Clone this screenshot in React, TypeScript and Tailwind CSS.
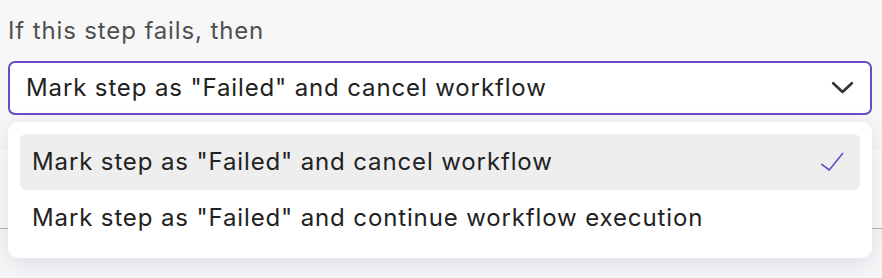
import React from "react";

export default function App() {
  return (
    <div
      className="relative w-[882px] h-[278px] overflow-hidden bg-[#f7f7f8]"
      style={{ fontFamily: "Inter, 'Noto Sans', sans-serif" }}
    >
      <div className="pl-[8px] pt-[15px] text-[24px] leading-[32px] tracking-[0.87px] text-[#505050]">
        If this step fails, then
      </div>
      <div className="ml-2 mr-[10px] mt-[14px] flex h-[54px] items-center justify-between rounded-[7px] border-2 border-[#6a4bc3] bg-white pl-4 pr-[16px]">
        <span className="text-[24px] leading-[32px] tracking-[0.87px] text-[#222222]">
          Mark step as "Failed" and cancel workflow
        </span>
        <svg width="23" height="14" viewBox="0 0 23 14" fill="none">
          <path
            d="M2.2 2.2 L11.5 11 L20.8 2.2"
            stroke="#333333"
            strokeWidth="2.6"
            strokeLinecap="round"
            strokeLinejoin="round"
          />
        </svg>
      </div>
      <div className="mt-[35px] h-[79px] border-b border-[#b6b6bb] bg-[#fbfbfc]" />

      <div className="absolute left-[8px] top-[122px] w-[864px] rounded-[10px] bg-white p-3 shadow-[0_6px_26px_rgba(50,40,90,0.13)]">
        <div className="flex h-[56px] items-center justify-between rounded-[6px] bg-[#eeeeef] pl-[12px] pr-[16px]">
          <span className="text-[24px] leading-[32px] tracking-[0.87px] text-[#222222]">
            Mark step as "Failed" and cancel workflow
          </span>
          <svg width="24" height="20" viewBox="0 0 24 20" fill="none">
            <path
              d="M1.8 12.3 L9.3 18 L22.6 1.4"
              stroke="#6a4bc3"
              strokeWidth="1.6"
              strokeLinecap="round"
              strokeLinejoin="round"
            />
          </svg>
        </div>
        <div className="flex h-[56px] items-center pl-[12px]">
          <span className="text-[24px] leading-[32px] tracking-[0.87px] text-[#222222]">
            Mark step as "Failed" and continue workflow execution
          </span>
        </div>
      </div>
    </div>
  );
}
